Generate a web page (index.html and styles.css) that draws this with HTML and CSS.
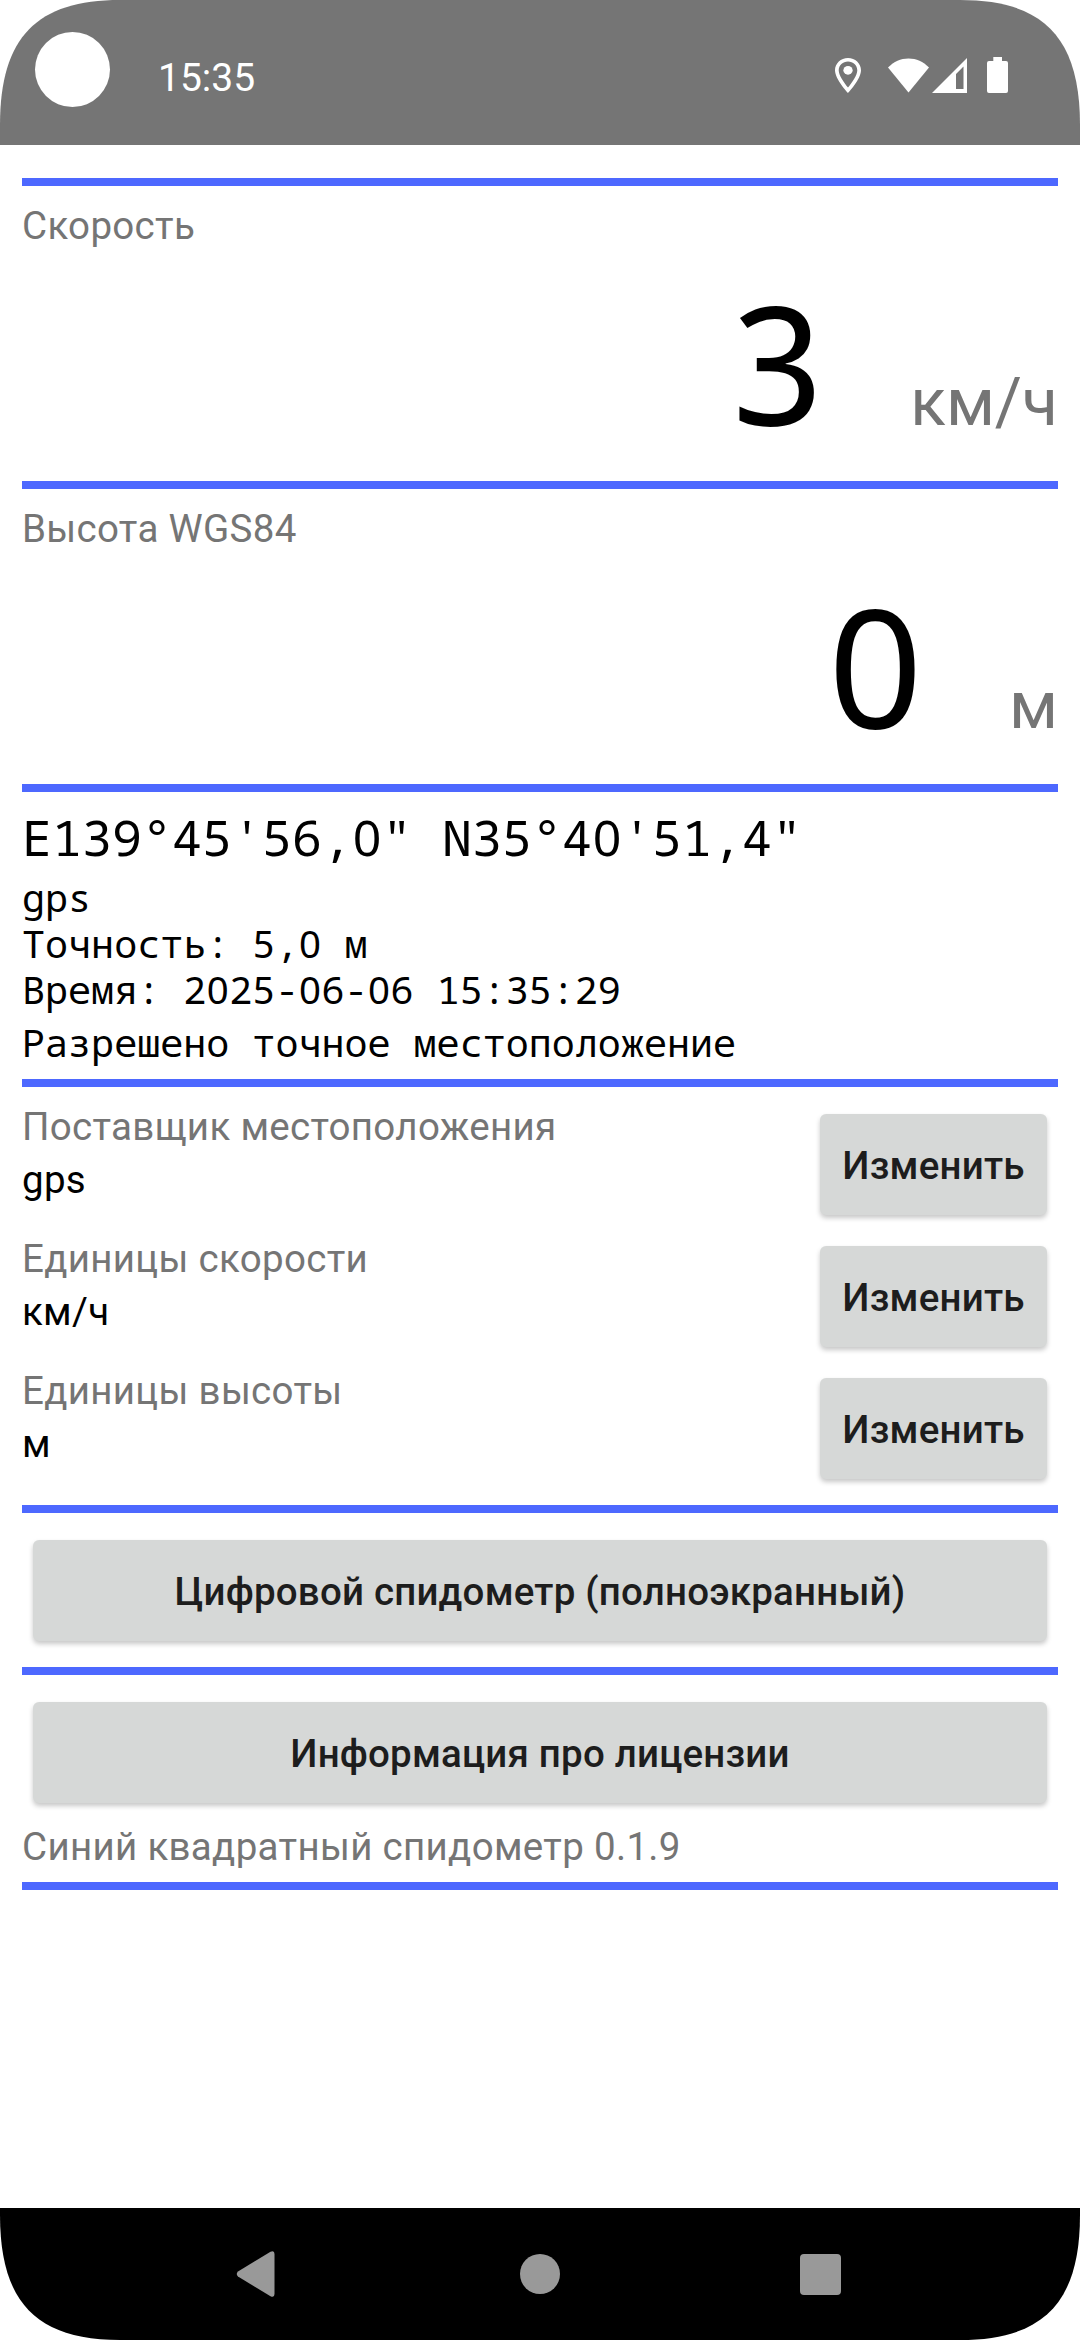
FILE: index.html
```html
<!DOCTYPE html>
<html lang="ru">
<head>
<meta charset="utf-8">
<title>Синий квадратный спидометр</title>
<link rel="stylesheet" href="styles.css">
</head>
<body>
<div class="screen">
  <header class="status">
    <span class="camera"></span>
    <time class="clock">15:35</time>
    <div class="status-icons">
      <svg class="icon-pin" width="26" height="35" viewBox="5 2 14 20" preserveAspectRatio="none" fill="#fff"><path d="M12 2C8.130 2 5 5.130 5 9c0 5.250 7 13 7 13s7-7.750 7-13c0-3.870-3.130-7-7-7zM7 9c0-2.760 2.240-5 5-5s5 2.240 5 5c0 2.880-2.880 7.190-5 9.880C9.920 16.210 7 11.850 7 9z"/><circle cx="12" cy="9" r="2.500"/></svg>
      <svg class="icon-wifi" width="41" height="35" viewBox="0 0 41 35" fill="#fff"><path d="M0 9.500C6 3.500 12.500 .5 20.500 .5S35 3.500 41 9.500L20.500 34.500z"/></svg>
      <svg class="icon-signal" width="35" height="35" viewBox="0 0 35 35" fill="#fff" fill-rule="evenodd"><path d="M35 0V35H0zM24 16V31H31.500V8.500z"/></svg>
      <svg class="icon-battery" width="21" height="36" viewBox="0 0 21 36" fill="#fff"><path d="M6.300 0H15V4H19Q21 4 21 6V34Q21 36 19 36H2Q0 36 0 34V6Q0 4 2 4H6.300z"/></svg>
    </div>
  </header>

  <main class="content">
    <section class="panel reading">
      <h2 class="label">Скорость</h2>
      <div class="measure"><span class="value">3</span><span class="unit">км/ч</span></div>
    </section>
    <section class="panel reading">
      <h2 class="label">Высота WGS84</h2>
      <div class="measure"><span class="value"><span class="z">0</span></span><span class="unit">м</span></div>
    </section>
    <section class="panel position">
      <p class="coords">E139°45'56,<span class="z">0</span>" N35°4<span class="z">0</span>'51,4"</p>
      <p class="detail">gps</p>
      <p class="detail">Точность: 5,<span class="z">0</span> м</p>
      <p class="detail">Время: 2<span class="z">0</span>25-<span class="z">0</span>6-<span class="z">0</span>6 15:35:29</p>
      <p class="detail permission">Разрешено точное местоположение</p>
    </section>
    <section class="panel settings">
      <div class="setting">
        <div><h2 class="label">Поставщик местоположения</h2><p class="current">gps</p></div>
        <button class="btn">Изменить</button>
      </div>
      <div class="setting">
        <div><h2 class="label">Единицы скорости</h2><p class="current">км/ч</p></div>
        <button class="btn">Изменить</button>
      </div>
      <div class="setting">
        <div><h2 class="label">Единицы высоты</h2><p class="current">м</p></div>
        <button class="btn">Изменить</button>
      </div>
    </section>
    <section class="panel action">
      <button class="btn wide">Цифровой спидометр (полноэкранный)</button>
    </section>
    <section class="panel about">
      <button class="btn wide">Информация про лицензии</button>
      <p class="label version">Синий квадратный спидометр 0.1.9</p>
    </section>
  </main>

  <nav class="navbar">
    <svg width="39" height="46" viewBox="0 0 39 46" fill="#999"><path d="M34.500 .8Q38.500-1 38.500 3V43Q38.500 47 34.500 45.200L2 25.500Q-.5 23 2 20.500z"/></svg>
    <svg width="40" height="40" viewBox="0 0 40 40" fill="#999"><circle cx="20" cy="20" r="20"/></svg>
    <svg width="41" height="41" viewBox="0 0 41 41" fill="#999"><rect width="41" height="41" rx="4"/></svg>
  </nav>
</div>
</body>
</html>
```
FILE: styles.css
```css
* { box-sizing: border-box; }
body { margin: 0; background: #fff; font-family: Roboto, sans-serif; font-size: 38.5px; color: #000; }
h2, p { margin: 0; font-size: inherit; font-weight: 400; }

.screen {
  display: flex; flex-direction: column; width: 1080px; height: 2340px; background: #fff;
  clip-path: path("M0 125C0 37 37 0 120 0H960C1043 0 1080 37 1080 125V2215C1080 2303 1043 2340 960 2340H120C37 2340 0 2303 0 2215z");
}

.status { display: flex; align-items: flex-start; height: 145px; padding: 0 72px 0 35px; background: #757575; color: #fff; }
.camera { width: 75px; height: 75px; margin-top: 32px; border-radius: 50%; background: #fff; }
.clock { margin: 52px 0 0 48px; line-height: 52px; font-size: 39px; }
.status-icons { display: flex; align-items: flex-end; height: 93px; margin-left: auto; }
.icon-wifi { margin-left: 27px; }
.icon-signal { margin-left: 3px; }
.icon-battery { margin-left: 20px; }

.content { flex: 1; padding: 33px 22px 0; }
.panel { border-top: 8px solid #4d68ff; }
.panel:last-child { border-bottom: 8px solid #4d68ff; }
.label { line-height: 52px; color: #757575; letter-spacing: .32px; }

.reading { height: 303px; padding-top: 14px; }
.measure { display: flex; justify-content: flex-end; align-items: baseline; gap: 84px; }
.value { font: 165px/218px "Noto Sans Mono", monospace; }
.unit { font-size: 66px; line-height: 80px; color: #757575; }

/* Plain zero, padded to the monospace cell */
.z { font-family: "Noto Sans", sans-serif; padding: 0 .014em; line-height: 1; }

.position { height: 295px; padding-top: 11px; font-family: "Noto Sans Mono", monospace; }
.coords { font-size: 50px; line-height: 68px; }
.detail { font-size: 38.400px; line-height: 46px; }
.coords + .detail { margin-top: 3px; }
.permission { margin-top: 7px; }

.settings { height: 426px; padding-top: 14px; }
.setting { display: flex; justify-content: space-between; height: 132px; }
.current { margin-top: 1px; line-height: 52px; letter-spacing: .3px; }

.btn {
  display: block; width: 227px; height: 101px; margin: 13px 11px 0 0; padding: 2px 0 0; border: 0; border-radius: 6px;
  background: #d6d8d7; color: #1d1d1d; font: 500 38.500px/99px Roboto, sans-serif; letter-spacing: .2px;
  box-shadow: 0 3px 5px rgba(0, 0, 0, .22);
}
.btn.wide { width: 1014px; margin: 0 11px; }
.action { height: 162px; padding-top: 27px; }
.about { height: 223px; padding-top: 27px; }
.version { margin-top: 18px; }

.navbar { display: flex; align-items: center; gap: 0 245px; height: 132px; padding-left: 236px; background: #000; }
.navbar svg:last-child { margin-left: -5px; }
```
